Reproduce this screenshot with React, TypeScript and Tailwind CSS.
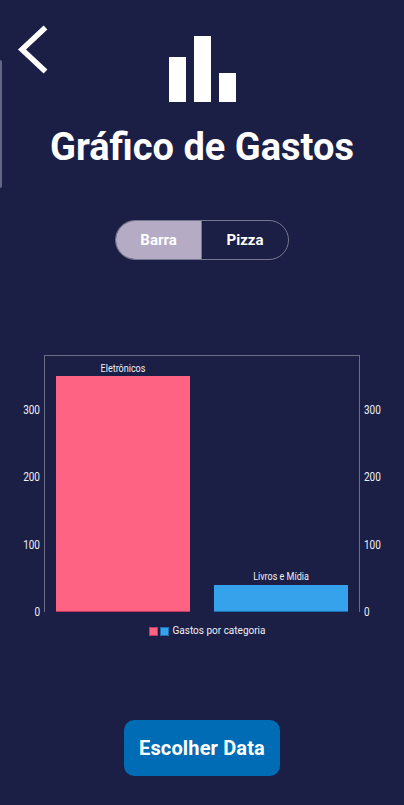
import React from 'react';

const ticks = ['300', '200', '100', '0'];

const Axis: React.FC<{ side: 'left' | 'right' }> = ({ side }) => (
    <div className={side === 'left'
        ? "flex flex-col justify-between items-end w-[44px] h-[264px] pt-[48px] pr-[4px]"
        : "flex flex-col justify-between items-start w-[44px] h-[264px] pt-[48px] pl-[4px]"}>
        {ticks.map((tick) => (
            <span key={tick} className="text-[10px] leading-[14px] text-[#f0f0f5] scale-y-[1.2]">{tick}</span>
        ))}
    </div>
);

export default function App() {
    return (
        <div className="relative w-[404px] h-[805px] overflow-hidden bg-[#1b1e45] flex flex-col items-center font-['Roboto',sans-serif] text-white">
            <div className="absolute left-0 top-[60px] w-[2px] h-[128px] bg-[#666785] rounded-r-[2px]"></div>

            <div className="w-full grid grid-cols-[1fr_auto_1fr]">
                <div className="pl-[17px] pt-[25px]">
                    <svg width="32" height="50" viewBox="0 0 32 50" fill="none">
                        <path d="M28.5 2.5L5 24.5L28.5 46.5" stroke="white" strokeWidth="5.5" />
                    </svg>
                </div>
                <div className="pt-[36px] flex items-end gap-[8px]">
                    <div className="w-[17px] h-[45px] bg-white"></div>
                    <div className="w-[17px] h-[66px] bg-white"></div>
                    <div className="w-[17px] h-[29px] bg-white"></div>
                </div>
                <div></div>
            </div>

            <h1 className="mt-[22px] text-[38px] leading-[46px] font-bold whitespace-nowrap">Gráfico de Gastos</h1>

            <div className="mt-[50px] flex w-[174px] h-[40px] border-[1.5px] border-[#77768f] rounded-[20px] overflow-hidden text-[15px] font-bold">
                <div className="w-[86px] bg-[#b5abc4] border-r-[1.5px] border-[#77768f] flex items-center justify-center">Barra</div>
                <div className="flex-1 flex items-center justify-center">Pizza</div>
            </div>

            <div className="mt-[95px] w-full flex items-start">
                <Axis side="left" />
                <div className="w-[316px] h-[257px] border-x border-t border-[#6c6d85] flex items-end gap-[24px] pl-[11px]">
                    <div className="flex flex-col items-center">
                        <span className="text-[9px] leading-[14px] text-[#f0f0f5] scale-y-[1.15]">Eletrônicos</span>
                        <div className="w-[134px] h-[236px] bg-[#ff6384] border-b border-[#c23a62]"></div>
                    </div>
                    <div className="flex flex-col items-center">
                        <span className="text-[9px] leading-[14px] mb-[1px] text-[#f0f0f5] scale-y-[1.15]">Livros e Mídia</span>
                        <div className="w-[134px] h-[27px] bg-[#36a2eb] border-b border-[#1e6fae]"></div>
                    </div>
                </div>
                <Axis side="right" />
            </div>

            <div className="mt-[5px] ml-[10px] flex items-center h-[14px]">
                <div className="w-[9px] h-[9px] bg-[#ff6384] border border-[#c23a62] mr-[2px]"></div>
                <div className="w-[9px] h-[9px] bg-[#36a2eb] border border-[#1e6fae] mr-[4px]"></div>
                <span className="text-[10px] leading-[14px] text-[#f0f0f5] scale-y-[1.1]">Gastos por categoria</span>
            </div>

            <button className="mt-[82px] w-[156px] h-[56px] rounded-[10px] bg-[#006cb5] text-[20px] tracking-[0.15px] font-bold text-white">Escolher Data</button>
        </div>
    );
}
